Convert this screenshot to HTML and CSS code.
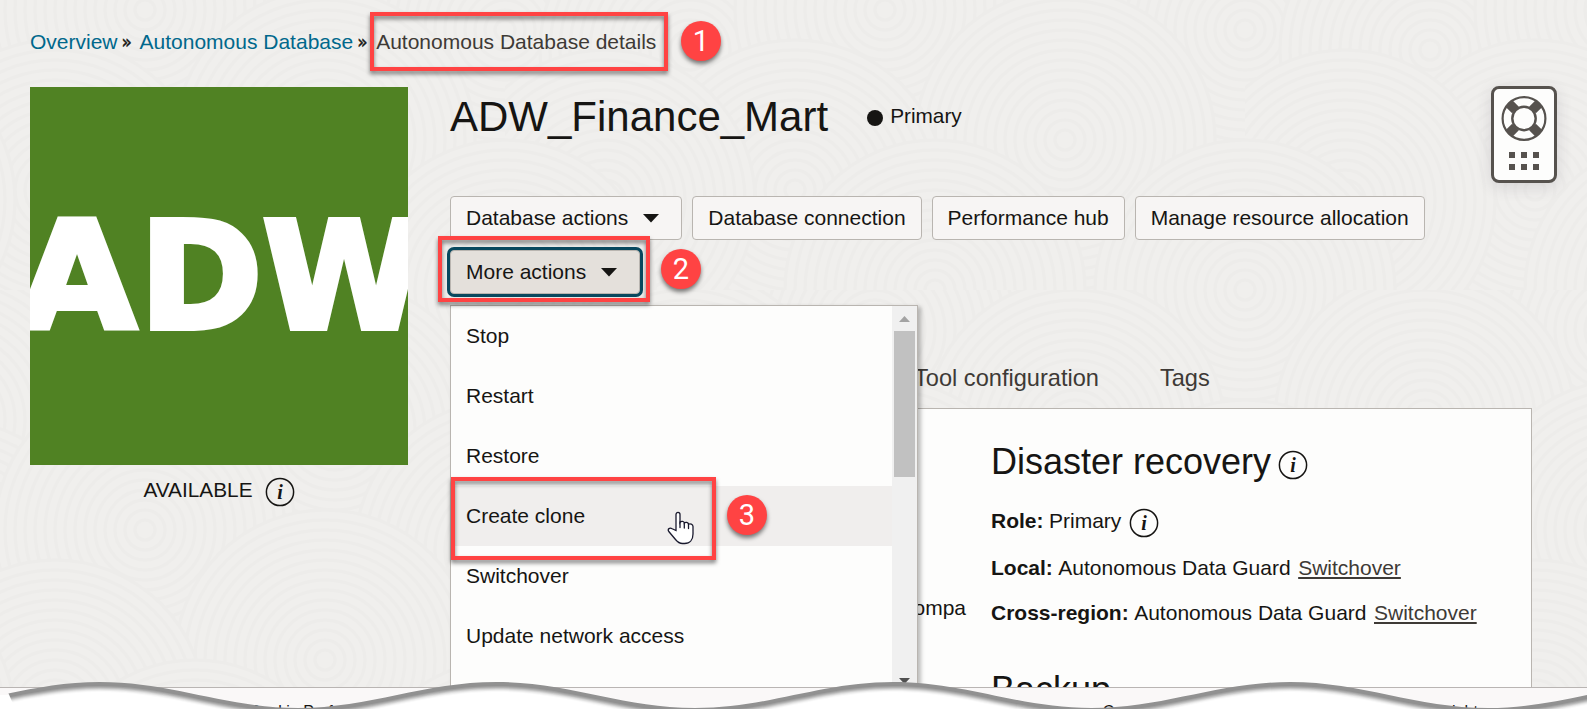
FILE: index.html
```
<!DOCTYPE html>
<html lang="en">
<head>
<meta charset="utf-8">
<title>Autonomous Database details</title>
<link rel="stylesheet" href="styles.css">
</head>
<body>
<div class="page">
  <svg class="backdrop" width="1587" height="709" viewBox="0 0 1587 709" aria-hidden="true">
    <defs>
      <g id="rings" class="rings">
        <circle r="150"/><circle r="140"/><circle r="130"/><circle r="120"/><circle r="110"/><circle r="100"/><circle r="90"/><circle r="80"/><circle r="70"/><circle r="60"/><circle r="50"/><circle r="40"/><circle r="30"/><circle r="20"/><circle r="10"/>
      </g>
      <pattern id="ripples" width="740" height="520" patternUnits="userSpaceOnUse" patternTransform="translate(505 -230)">
        <use href="#rings" x="0" y="0"/><use href="#rings" x="740" y="0"/>
        <use href="#rings" x="370" y="40"/>
        <use href="#rings" x="180" y="130"/><use href="#rings" x="570" y="140"/>
        <use href="#rings" x="0" y="260"/><use href="#rings" x="740" y="260"/>
        <use href="#rings" x="185" y="280"/><use href="#rings" x="380" y="240"/>
        <use href="#rings" x="560" y="370"/><use href="#rings" x="290" y="420"/>
        <use href="#rings" x="100" y="430"/><use href="#rings" x="0" y="520"/>
        <use href="#rings" x="740" y="520"/><use href="#rings" x="430" y="520"/>
      </pattern>
    </defs>
    <rect width="1587" height="709" fill="url(#ripples)"/>
  </svg>

  <nav class="crumbs">
    <a class="crumb-link" href="#">Overview</a><span class="sep">»</span>
    <a class="crumb-link second" href="#">Autonomous Database</a><span class="sep">»</span>
    <span class="crumb-current">Autonomous Database details</span>
  </nav>

  <div class="layout">
    <aside class="side">
      <svg class="tile" width="378" height="378" viewBox="0 0 378 378">
        <text class="tile-text" transform="translate(-12 241) scale(1.03 1)">A</text>
        <text class="tile-text" x="109.400" y="241">D</text>
        <text class="tile-text" x="232.500" y="241">W</text>
      </svg>
      <div class="state"><span>AVAILABLE</span>
        <svg class="info" width="30" height="30" viewBox="0 0 30 30"><circle cx="15" cy="15" r="13.6"/><text x="15" y="21.5">i</text></svg>
      </div>
    </aside>

    <main class="main">
      <div class="heading">
        <h1 class="title">ADW_Finance_Mart</h1>
        <span class="dot"></span><span class="role-label">Primary</span>
      </div>
      <div class="actions">
        <button class="btn drop">Database actions<svg class="caret" width="16" height="9" viewBox="0 0 16 9"><path d="M0 0H16L8 8.500Z"/></svg></button>
        <button class="btn">Database connection</button>
        <button class="btn">Performance hub</button>
        <button class="btn">Manage resource allocation</button>
        <button class="btn drop active">More actions<svg class="caret" width="16" height="9" viewBox="0 0 16 9"><path d="M0 0H16L8 8.500Z"/></svg></button>
      </div>
      <div class="tabs"><span>Tool configuration</span><span>Tags</span></div>
      <section class="panel">
        <div class="col-left">ompa</div>
        <div class="col-right">
          <h2 class="sub">Disaster recovery <svg class="info" width="30" height="30" viewBox="0 0 30 30"><circle cx="15" cy="15" r="13.6"/><text x="15" y="21.5">i</text></svg></h2>
          <p class="row role"><b>Role:</b> Primary <svg class="info" width="30" height="30" viewBox="0 0 30 30"><circle cx="15" cy="15" r="13.6"/><text x="15" y="21.5">i</text></svg></p>
          <p class="row local"><b>Local:</b> Autonomous Data Guard <a class="switch" href="#">Switchover</a></p>
          <p class="row cross"><b>Cross-region:</b> Autonomous Data Guard <a class="switch" href="#">Switchover</a></p>
          <h2 class="sub backup">Backup</h2>
        </div>
      </section>
    </main>
  </div>

  <footer class="footer">
    <span>Cookie Preferences</span>
    <span>Copyright © 2024, Oracle and/or its affiliates. All rights reserved.</span>
  </footer>

  <div class="menu">
    <ul class="items">
      <li>Stop</li><li>Restart</li><li>Restore</li><li class="hover">Create clone</li><li>Switchover</li><li>Update network access</li>
    </ul>
    <div class="scroll">
      <svg width="11" height="6" viewBox="0 0 11 6"><path fill="#a3a3a3" d="M0 6 5.500 0 11 6Z"/></svg>
      <div class="thumb"></div>
      <svg class="down" width="11" height="6" viewBox="0 0 11 6"><path fill="#505050" d="M0 0H11L5.500 6Z"/></svg>
    </div>
  </div>

  <div class="help">
    <svg width="60" height="91" viewBox="0 0 60 91">
      <g fill="none" stroke="#56524e">
        <path stroke-width="9.500" d="M14.800 14.300 21.500 21M38.500 38l6.700 6.700M45.200 14.300 38.500 21M21.500 38l-6.700 6.700"/>
        <circle cx="30" cy="29.500" r="21.400" stroke-width="2.200"/>
        <circle cx="30" cy="29.500" r="11.700" stroke-width="2.400" fill="#fdfdfc"/>
      </g>
      <path fill="#56524e" d="M15 63h6v6h-6zM27 63h6v6h-6zM39 63h6v6h-6zM15 75h6v6h-6zM27 75h6v6h-6zM39 75h6v6h-6z"/>
    </svg>
  </div>

  <div class="mark mark-1"></div><div class="num num-1">1</div>
  <div class="mark mark-2"></div><div class="num num-2">2</div>
  <div class="mark mark-3"></div><div class="num num-3">3</div>

  <svg class="cursor" width="28" height="34" viewBox="0 0 28 34">
    <path d="M9 19.500V3.500C9 .6 13 .6 13 3.500V11.500C14 9.800 17.100 10 17.300 12 18.500 10.800 21.200 11.200 21.500 13.200 23 12.300 26 13 26 15.500V23C26 28.500 23 32.500 17.500 32.500H15.500C12.500 32.500 10.500 31 8.500 28.500L1.800 20.500C.2 18 2.700 16.200 5.200 17.800Z"/>
    <path d="M13 11V16.500M17.300 12.500V17M21.500 13.500V17.500"/>
  </svg>

  <svg class="tear" width="1587" height="709" viewBox="0 0 1587 709" aria-hidden="true">
    <defs>
      <path id="wave" d="M-98 708C-26 708 28 682 100 682S226 708 298 708 424 682 496.500 682 622 708 695 708 821 682 893 682 1019 708 1091.500 708 1218 682 1290 682 1416 708 1488 708 1614 682 1686 682V730H-98Z"/>
      <clipPath id="torn"><path d="M7 690 14 706V709H1587V670H7Z"/></clipPath>
    </defs>
    <path fill="#fff" d="M0 695H14V709H0Z"/>
    <use href="#wave" fill="#919191" clip-path="url(#torn)"/>
    <g fill="#fff">
      <use href="#wave" y="4" opacity=".15"/>
      <use href="#wave" y="5" opacity=".2"/>
      <use href="#wave" y="6" opacity=".3"/>
      <use href="#wave" y="7" opacity=".4"/>
      <use href="#wave" y="8" opacity=".5"/>
      <use href="#wave" y="9" opacity=".7"/>
      <use href="#wave" y="10"/>
    </g>
  </svg>
</div>
</body>
</html>
```
FILE: styles.css
```
* { box-sizing: border-box; }
body { margin: 0; }
.page {
  position: relative;
  width: 1587px;
  height: 709px;
  overflow: hidden;
  display: flex;
  flex-direction: column;
  background: #efeeec;
  color: #161513;
  font: 21px/28px "Liberation Sans", Arial, sans-serif;
}
.backdrop { position: absolute; left: 0; top: 0; }
.rings circle { fill: #f0efed; stroke: #edecea; stroke-width: 3; }

.crumbs { position: relative; display: flex; padding: 28px 0 0 30px; height: 56px; flex: none; white-space: nowrap; }
.crumb-link { color: #00688c; text-decoration: none; }
.second { margin-left: 6px; }
.sep { margin-left: 4px; width: 12px; font: 17px/28px "DejaVu Sans", sans-serif; -webkit-text-stroke: .4px #161513; }
.crumb-current { margin-left: 7px; color: #3e3a36; }

.layout { position: relative; display: flex; gap: 42px; margin-top: 31px; padding-left: 30px; height: 600px; flex: none; }
.side { width: 378px; flex: none; }
.tile { display: block; background: #508223; overflow: hidden; }
.tile-text { font: bold 148px "DejaVu Sans", sans-serif; fill: #fff; stroke: #fff; stroke-width: 6; }
.state { display: flex; align-items: center; justify-content: center; gap: 12px; margin-top: 10px; font-size: 20.8px; }
.state .info { position: relative; top: 2px; }
.info circle { fill: none; stroke: #161513; stroke-width: 1.5; }
.info text { font: italic bold 20px "Liberation Serif", serif; text-anchor: middle; fill: #161513; }

.main { width: 1082px; flex: none; }
.heading { display: flex; align-items: center; height: 60px; }
.title { margin: 0 39px 0 0; font-size: 42px; line-height: 60px; font-weight: normal; }
.dot { width: 16px; height: 16px; border-radius: 50%; background: #161513; margin: 2px 7px 0 0; }
.role-label { margin-top: -2px; font-size: 20.8px; }
.actions { display: flex; flex-wrap: wrap; gap: 10px 10px; margin-top: 49px; width: 1020px; }
.btn {
  height: 44px;
  display: flex;
  align-items: center;
  padding: 0 15px;
  border: 1px solid #b9b5b0;
  border-radius: 4px;
  background: #f7f5f4;
  color: #161513;
  font: inherit;
  white-space: nowrap;
}
.drop { padding-right: 22px; }
.caret { margin: 1px 0 0 15px; fill: #161513; }
.active { background: #e4e0db; box-shadow: 0 0 0 3px #08485e; }
.tabs { display: flex; gap: 61px; padding: 69px 0 0 464px; height: 114px; font-size: 23.6px; line-height: 30px; color: #3e3a36; }
.panel { display: flex; height: 290px; border: 1px solid #b9b5b0; background: #fdfdfc; }
.col-left { width: 515px; flex: none; text-align: right; padding-top: 185px; }
.col-right { padding-left: 25px; white-space: nowrap; }
.sub { display: flex; align-items: center; gap: 7px; margin: 33px 0 0; font-size: 36px; line-height: 40px; font-weight: normal; }
.sub .info { margin-top: 5px; }
.row { display: flex; align-items: center; gap: 5.5px; margin: 0; height: 28px; }
.role { margin-top: 25px; }
.local { margin-top: 19px; }
.cross { margin-top: 17px; }
.role .info { margin: 4px 0 0 2px; }
.switch { margin-left: 2px; color: #3e3a36; text-decoration-thickness: 2px; text-underline-offset: 2px; }
.backup { margin-top: 43px; }

.footer {
  position: absolute;
  left: 0;
  top: 687px;
  width: 1587px;
  height: 22px;
  display: flex;
  justify-content: space-between;
  padding: 13px 30px 0 249px;
  border-top: 1px solid #b9b5b3;
  background: #faf8f8;
  font-size: 16px;
  line-height: 22px;
}

.menu {
  position: absolute;
  left: 450px;
  top: 305px;
  width: 468px;
  height: 382px;
  display: flex;
  border: 1px solid #b9b5b0;
  border-bottom: 0;
  background: #fdfdfc;
  box-shadow: 3px 2px 4px rgba(0, 0, 0, .25);
  clip-path: inset(-2px -10px 0 -2px);
}
.items { flex: 1; margin: 0; padding: 0; list-style: none; }
.items li { height: 60px; padding-left: 15px; line-height: 60px; }
.items .hover { background: #f0eeed; }
.scroll { width: 25px; display: flex; flex-direction: column; align-items: center; background: #f0f0f0; padding-top: 10px; }
.thumb { width: 21px; height: 146px; margin-top: 9px; background: #c1c1c1; }
.down { margin-top: 201px; }

.help {
  position: absolute;
  left: 1491px;
  top: 86px;
  width: 66px;
  height: 97px;
  border: 3px solid #56524e;
  border-radius: 8px;
  background: #fdfdfc;
  box-shadow: 0 4px 16px rgba(60, 50, 70, .14);
}
.help svg { display: block; }

.mark { position: absolute; border: 4px solid #ff4343; filter: drop-shadow(0 3px 2px rgba(0, 0, 0, .5)); }
.mark-1 { left: 370px; top: 12px; width: 298px; height: 59px; }
.mark-2 { left: 438px; top: 236px; width: 212px; height: 66px; }
.mark-3 { left: 451px; top: 477px; width: 265px; height: 83px; }
.num {
  position: absolute;
  width: 40px;
  height: 40px;
  border-radius: 50%;
  background: #ff4343;
  color: #fff;
  font: 29px/41px Roboto, "Noto Sans", sans-serif;
  text-align: center;
  box-shadow: 0 3px 4px rgba(0, 0, 0, .5);
}
.num-1 { left: 681px; top: 21px; }
.num-2 { left: 661px; top: 249px; }
.num-3 { left: 727px; top: 495px; }
.cursor { position: absolute; left: 667px; top: 511px; fill: #fff; stroke: #1a1a2e; stroke-width: 1.3; stroke-linecap: round; }
.tear { position: absolute; left: 0; top: 0; }
```
